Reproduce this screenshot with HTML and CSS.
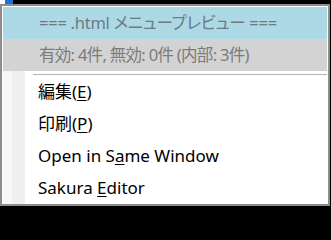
FILE: index.html
```html
<!DOCTYPE html>
<html lang="ja">
<head>
<meta charset="utf-8">
<link rel="stylesheet" href="styles.css">
</head>
<body>
<div class="topstrip"><span class="w"></span><span class="b"></span></div>
<div class="menu">
  <div class="band head">=== .html メニュープレビュー ===</div>
  <div class="band stat">有効: 4件, 無効: 0件 (内部: 3件)</div>
  <div class="items">
    <div class="sep"></div>
    <div class="item">編集(<u>E</u>)</div>
    <div class="item">印刷(<u>P</u>)</div>
    <div class="item">Open in S<u>a</u>me Window</div>
    <div class="item">Sakura <u>E</u>ditor</div>
  </div>
</div>
</body>
</html>
```
FILE: styles.css
```css
html, body { margin: 0; padding: 0; }
html { background: #000; }
body {
  background: #000;
  width: 331px;
  height: 207px;
  overflow: hidden;
  font-family: "Noto Sans", "Noto Sans CJK JP", sans-serif;
  font-size: 17px;
  font-feature-settings: "palt";
}
.topstrip { display: flex; height: 4px; }
.topstrip .w { width: 5px; background: #fff; }
.topstrip .b { width: 8px; background: #1a73d9; }
.menu {
  width: 324px;
  height: 197px;
  border: 2px solid #8c8c8c;
  background: #fff;
  padding: 1px 1px 0 1px;
  overflow: hidden;
}
.band {
  height: 32px;
  line-height: 32px;
  padding-left: 36px;
  white-space: nowrap;
  font-size: 16.5px;
}
.head { background: #add8e6; color: #6c7b83; letter-spacing: -0.25px; }
.stat { background: #d3d3d3; color: #7b7b7b; letter-spacing: -0.7px; }
.items {
  background: linear-gradient(to right, #f7f7f7 0, #f7f7f7 9px, #efefef 9px, #efefef 22px, #fff 22px);
  padding-top: 3px;
  height: 130px;
}
.sep {
  height: 1px;
  background: #b4b4b4;
  margin-left: 30px;
  margin-bottom: 1px;
}
.item {
  height: 32px;
  line-height: 32px;
  padding-left: 35px;
  color: #000;
  white-space: nowrap;
}
u { text-decoration-thickness: 1px; text-underline-offset: 2px; }
```
